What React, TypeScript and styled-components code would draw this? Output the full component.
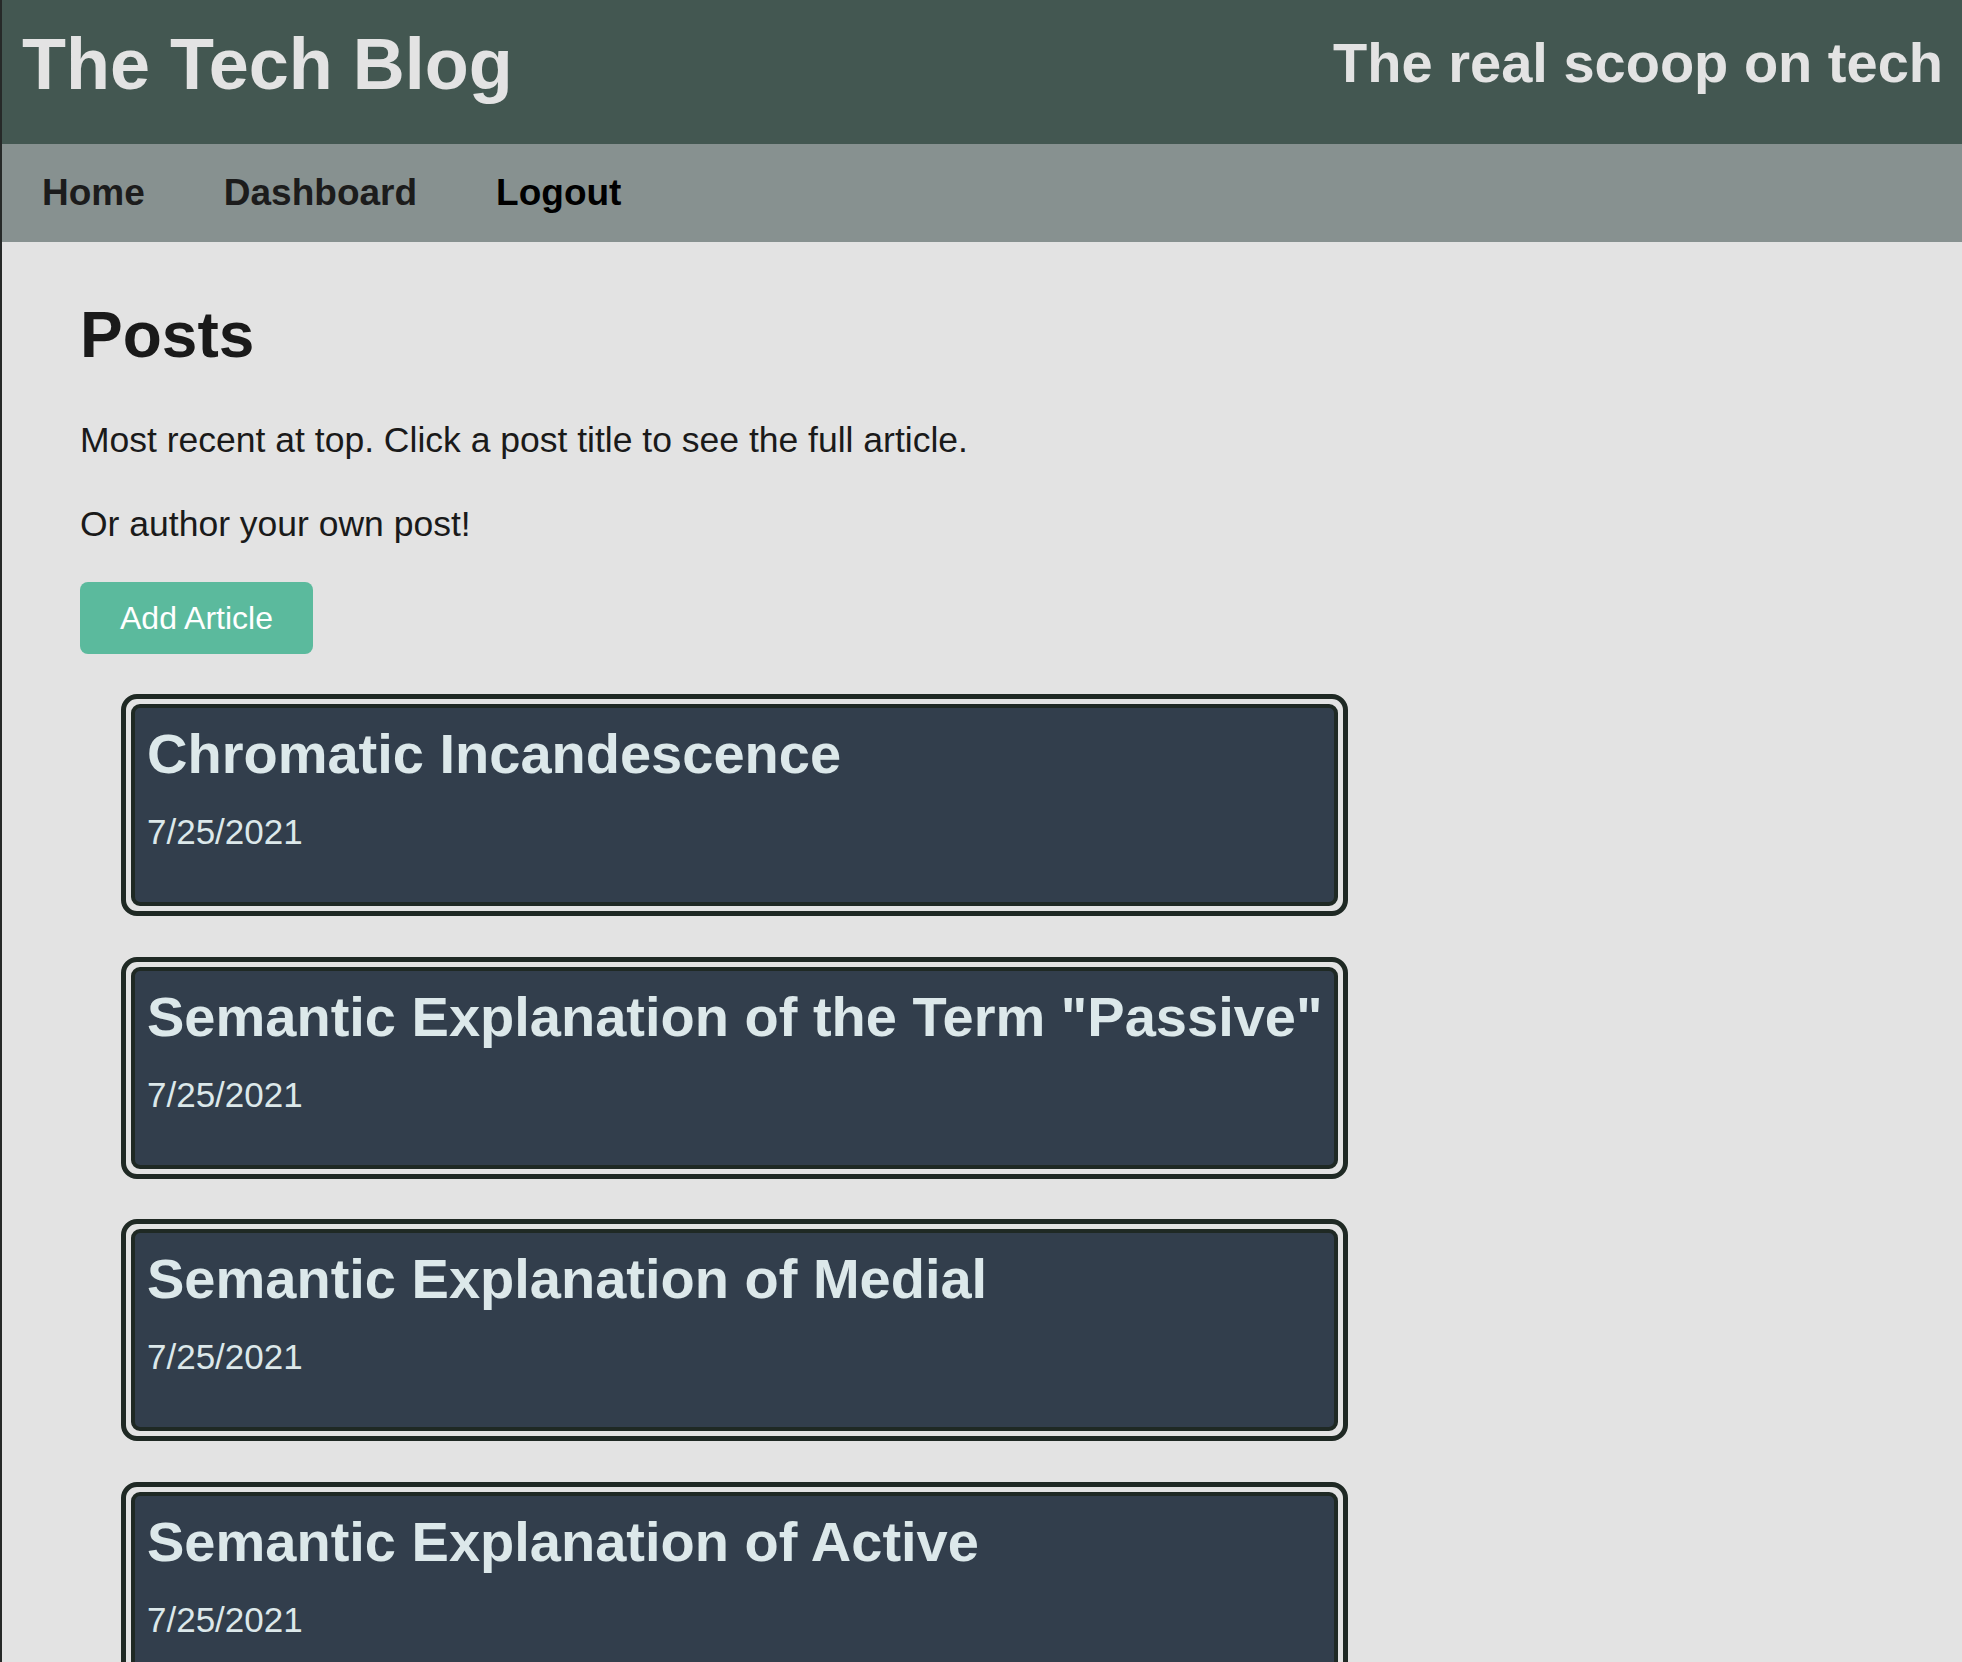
import styled, { createGlobalStyle } from 'styled-components'

const GlobalStyle = createGlobalStyle`
  html {
    scrollbar-width: none;
  }
  html::-webkit-scrollbar {
    display: none;
  }
  body {
    margin: 0;
    background: #e3e3e3;
    border-left: 2px solid #262928;
    font-family: 'Liberation Sans', Arial, Helvetica, sans-serif;
    color: #1a1a1a;
  }
`

// @ NOTE header + nav

const Header = styled.header`
  display: flex;
  justify-content: space-between;
  align-items: flex-start;
  height: 144px;
  box-sizing: border-box;
  padding: 0 19px 0 20px;
  background: #435751;
  color: #e3e3e3;
`

const SiteTitle = styled.h1`
  margin: 23px 0 0;
  font-size: 72px;
  font-weight: 700;
  line-height: normal;
`

const Tagline = styled.p`
  margin: 30px 0 0;
  font-size: 56px;
  font-weight: 700;
  line-height: normal;
`

const Nav = styled.nav`
  display: flex;
  align-items: center;
  gap: 79px;
  height: 98px;
  padding-left: 40px;
  background: #879190;
`

const NavLink = styled.a<{ $active?: boolean }>`
  font-size: 37px;
  font-weight: 700;
  color: ${(props) => (props.$active ? '#000' : '#1c1c1c')};
  text-decoration: none;
  cursor: pointer;
`

// @ NOTE page body

const Main = styled.main`
  padding: 0 78px 40px;
`

const PageTitle = styled.h2`
  margin: 56px 0 0;
  font-size: 64px;
  font-weight: 700;
  line-height: normal;
`

const Lead = styled.p<{ $gap: number }>`
  margin: ${(props) => props.$gap}px 0 0;
  font-size: 35.5px;
  line-height: normal;
`

const AddButton = styled.button`
  display: block;
  margin-top: 37px;
  height: 72px;
  padding: 0 40px;
  border: none;
  border-radius: 8px;
  background: #5bba9d;
  color: #fff;
  font-family: inherit;
  font-size: 32px;
  cursor: pointer;
`

const PostList = styled.section`
  margin-top: 40px;
  padding-left: 41px;
`

const PostCard = styled.article`
  width: 1227px;
  box-sizing: border-box;
  border: 5px solid #1f2924;
  border-radius: 16px;
  padding: 5px;
  & + & {
    margin-top: 40.5px;
  }
`

const PostBody = styled.div`
  height: 202px;
  box-sizing: border-box;
  padding: 13px 0 0 12px;
  border: 4px solid #1f2924;
  border-radius: 9px;
  background: #323e4c;
  color: #dce8ea;
`

const PostTitle = styled.h3`
  margin: 0;
  font-size: 56px;
  font-weight: 700;
  line-height: normal;
  white-space: nowrap;
`

const PostDate = styled.p`
  margin: 26px 0 0;
  font-size: 35px;
  line-height: normal;
`

const posts = [
  { id: 1, title: 'Chromatic Incandescence', date: '7/25/2021' },
  { id: 2, title: 'Semantic Explanation of the Term "Passive"', date: '7/25/2021' },
  { id: 3, title: 'Semantic Explanation of Medial', date: '7/25/2021' },
  { id: 4, title: 'Semantic Explanation of Active', date: '7/25/2021' },
]

const App = () => {
  return (
    <>
      <GlobalStyle />
      <Header>
        <SiteTitle>The Tech Blog</SiteTitle>
        <Tagline>The real scoop on tech</Tagline>
      </Header>
      <Nav>
        <NavLink href="#">Home</NavLink>
        <NavLink href="#">Dashboard</NavLink>
        <NavLink href="#" $active>
          Logout
        </NavLink>
      </Nav>
      <Main>
        <PageTitle>Posts</PageTitle>
        <Lead $gap={48}>
          Most recent at top. Click a post title to see the full article.
        </Lead>
        <Lead $gap={43}>Or author your own post!</Lead>
        <AddButton>Add Article</AddButton>
        <PostList>
          {posts.map((post) => (
            <PostCard key={post.id}>
              <PostBody>
                <PostTitle>{post.title}</PostTitle>
                <PostDate>{post.date}</PostDate>
              </PostBody>
            </PostCard>
          ))}
        </PostList>
      </Main>
    </>
  )
}

export default App
